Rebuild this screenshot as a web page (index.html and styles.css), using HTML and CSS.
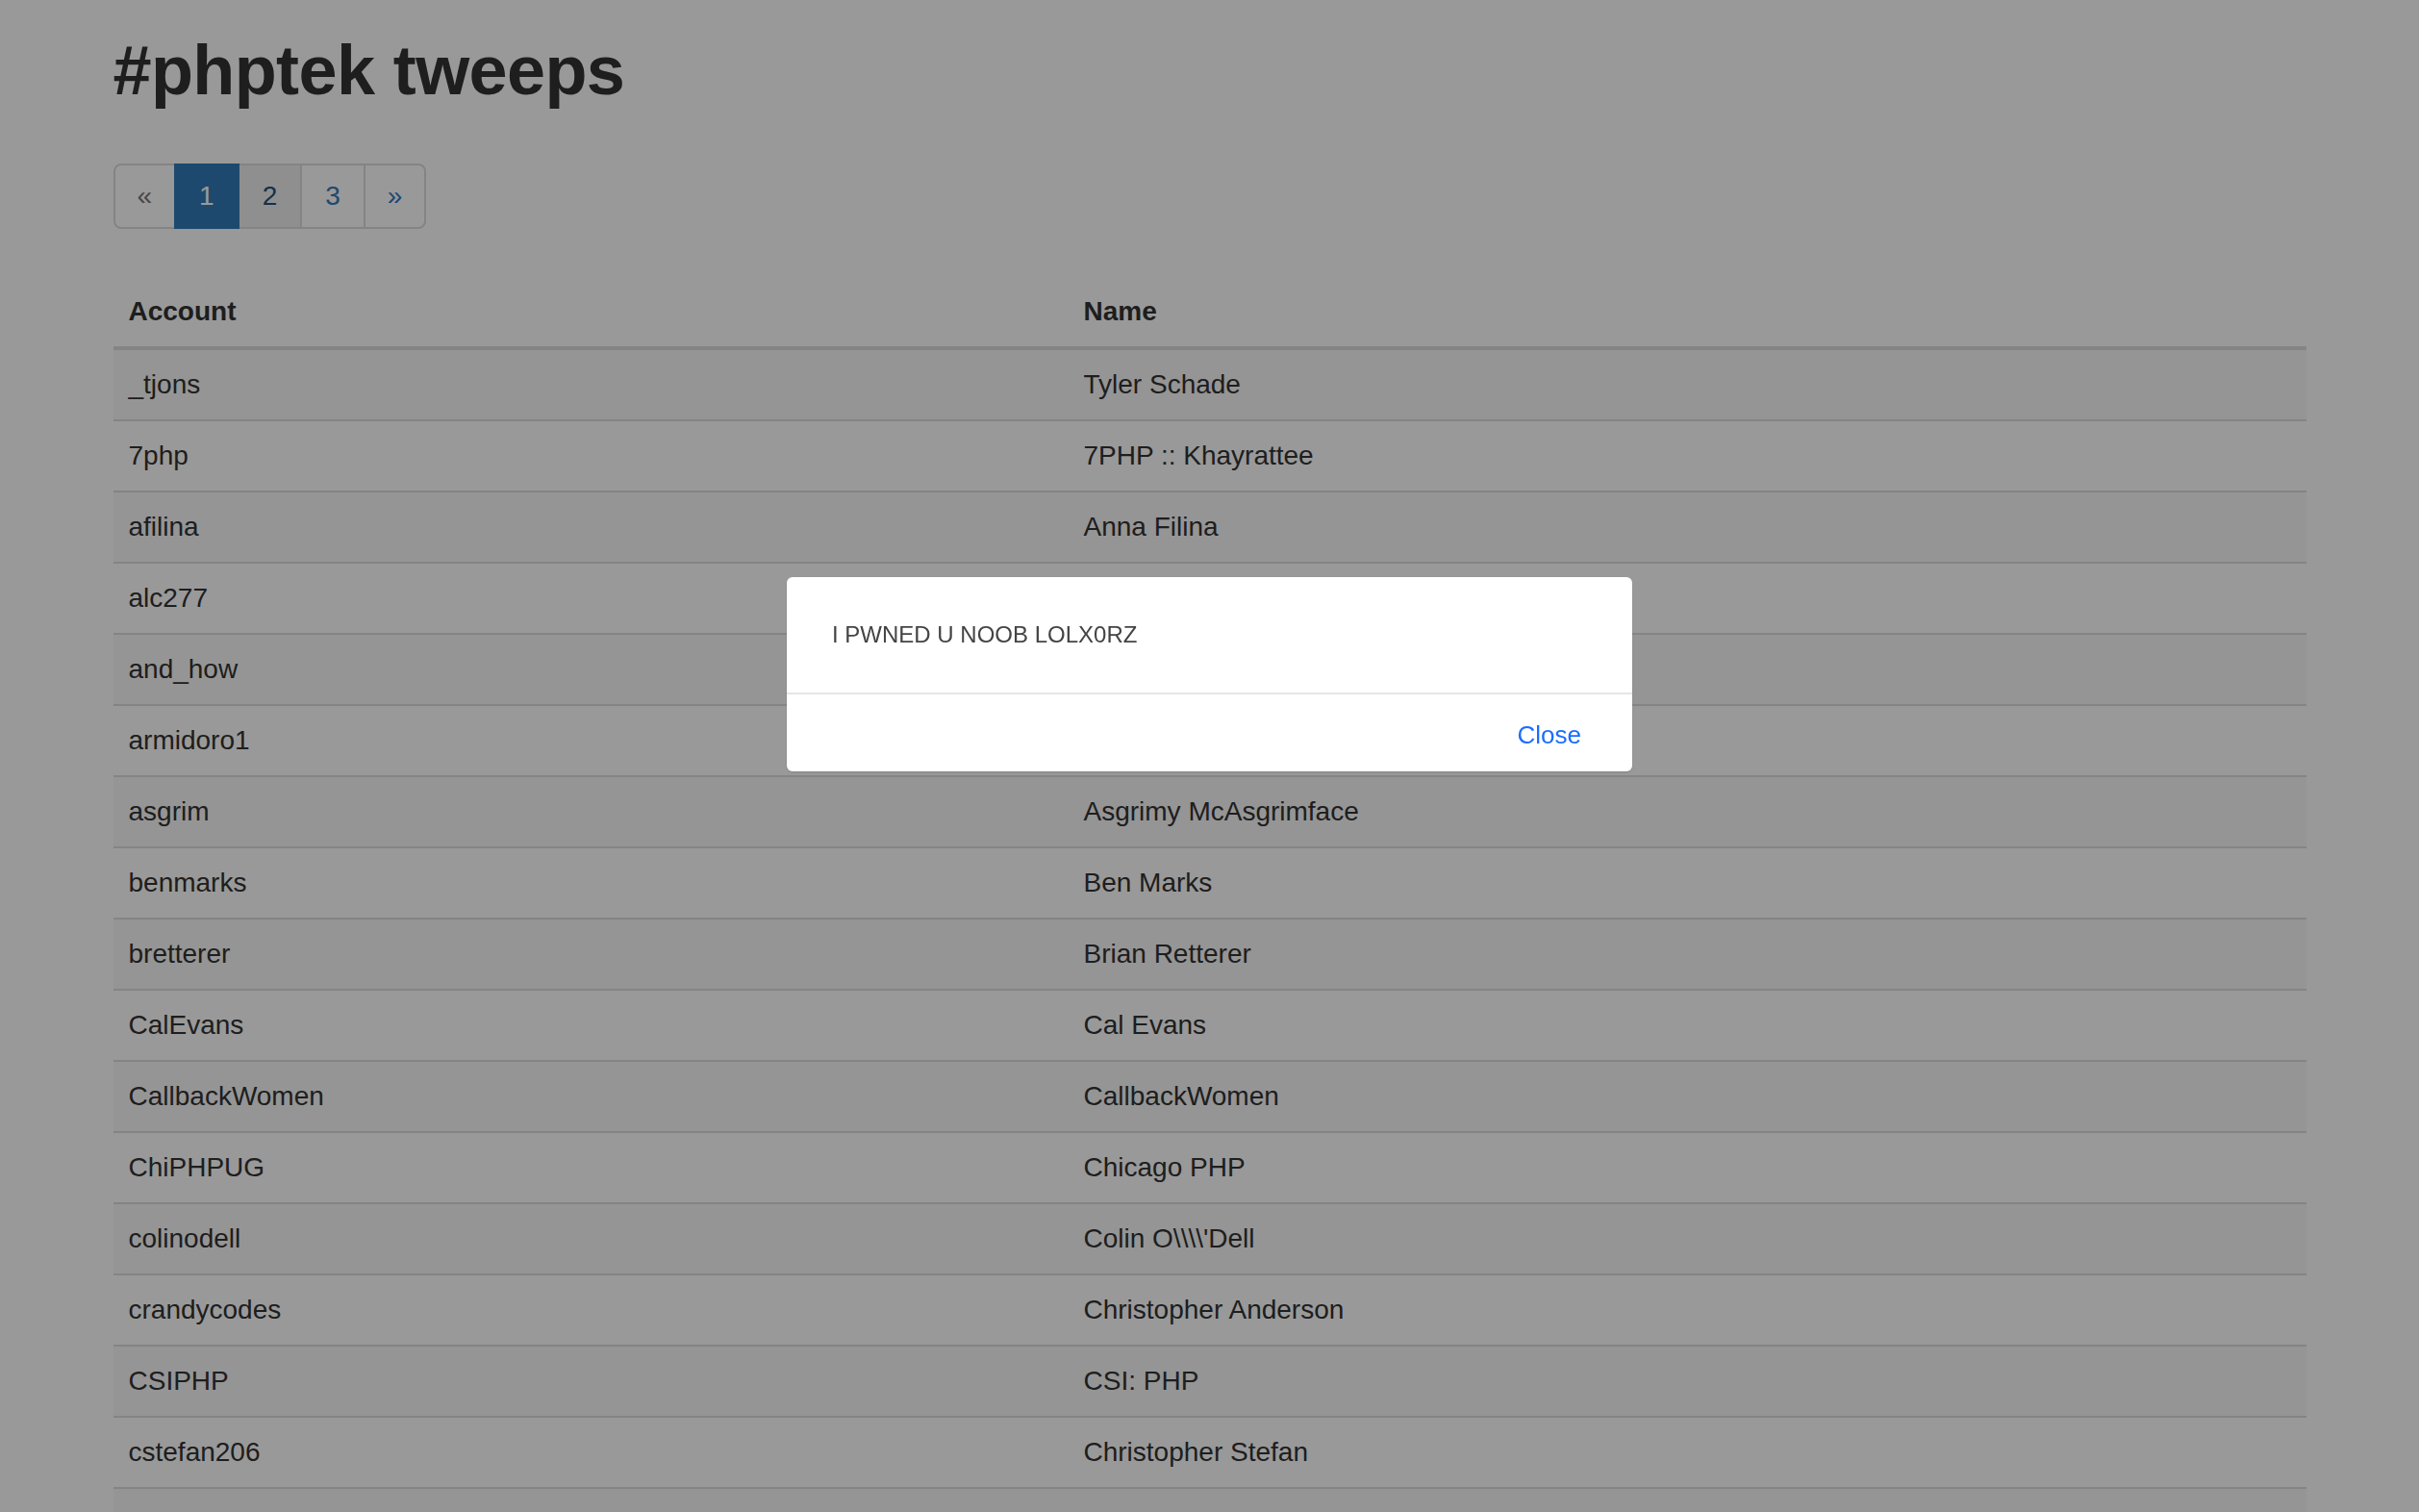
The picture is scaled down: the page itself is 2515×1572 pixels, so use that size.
FILE: index.html
```html
<!DOCTYPE html>
<html lang="en">
<head>
<meta charset="utf-8">
<title>#phptek tweeps</title>
<link rel="stylesheet" href="styles.css">
</head>
<body class="modal-open">
<div class="container">
  <h1 class="title">#phptek tweeps</h1>
  <nav class="pager-nav">
    <ul class="pagination">
      <li class="disabled arrow"><a href="#">&laquo;</a></li>
      <li class="active"><a href="#">1</a></li>
      <li class="hover"><a href="#">2</a></li>
      <li><a href="#">3</a></li>
      <li class="arrow"><a href="#">&raquo;</a></li>
    </ul>
  </nav>
  <table class="table">
    <thead>
      <tr><th class="col-account">Account</th><th>Name</th></tr>
    </thead>
    <tbody>
      <tr><td>_tjons</td><td>Tyler Schade</td></tr>
      <tr><td>7php</td><td>7PHP :: Khayrattee</td></tr>
      <tr><td>afilina</td><td>Anna Filina</td></tr>
      <tr><td>alc277</td><td>Andrew Caya</td></tr>
      <tr><td>and_how</td><td>Andrew Howard</td></tr>
      <tr><td>armidoro1</td><td>Armando Midoro</td></tr>
      <tr><td>asgrim</td><td>Asgrimy McAsgrimface</td></tr>
      <tr><td>benmarks</td><td>Ben Marks</td></tr>
      <tr><td>bretterer</td><td>Brian Retterer</td></tr>
      <tr><td>CalEvans</td><td>Cal Evans</td></tr>
      <tr><td>CallbackWomen</td><td>CallbackWomen</td></tr>
      <tr><td>ChiPHPUG</td><td>Chicago PHP</td></tr>
      <tr><td>colinodell</td><td>Colin O\\\\'Dell</td></tr>
      <tr><td>crandycodes</td><td>Christopher Anderson</td></tr>
      <tr><td>CSIPHP</td><td>CSI: PHP</td></tr>
      <tr><td>cstefan206</td><td>Christopher Stefan</td></tr>
      <tr><td>&nbsp;</td><td>&nbsp;</td></tr>
    </tbody>
  </table>
</div>
<div class="backdrop"></div>
<div class="dialog">
  <div class="dialog-body">I PWNED U NOOB LOLX0RZ</div>
  <div class="dialog-footer"><a class="dialog-close" href="#">Close</a></div>
</div>
</body>
</html>
```
FILE: styles.css
```css
html, body {
  margin: 0;
  padding: 0;
  height: 100%;
  overflow: hidden;
}

body {
  font-family: "Liberation Sans", Arial, sans-serif;
  font-size: 28px;
  line-height: 40px;
  color: #333;
  background: #fff;
}

.container {
  width: 2280px;
  padding: 0 30px;
  margin: 0 auto;
}

.title {
  margin: 34px 0 0;
  font-size: 72px;
  line-height: 79.2px;
  font-weight: 700;
  letter-spacing: -0.6px;
  color: #333;
}

.pager-nav {
  margin-top: 57px;
}

.pagination {
  display: flex;
  margin: 0;
  padding: 0;
  list-style: none;
}

.pagination li a {
  display: block;
  padding: 12px 24px;
  line-height: 40px;
  border: 2px solid #ddd;
  margin-left: -2px;
  color: #337ab7;
  background: #fff;
  text-decoration: none;
  position: relative;
}

.pagination li.arrow a {
  padding-left: 23px;
  padding-right: 23px;
}

.pagination li:first-child a {
  margin-left: 0;
  border-radius: 8px 0 0 8px;
}

.pagination li:last-child a {
  border-radius: 0 8px 8px 0;
}

.pagination li.disabled a {
  color: #777;
}

.pagination li.active a {
  background: #337ab7;
  border-color: #337ab7;
  color: #fff;
  z-index: 2;
}

.pagination li.hover a {
  background: #eee;
  color: #23527c;
}

.table {
  width: 100%;
  margin-top: 50px;
  border-collapse: collapse;
  table-layout: fixed;
}

.table th {
  text-align: left;
  padding: 16px;
  font-weight: 700;
  border-bottom: 4px solid #ddd;
  vertical-align: bottom;
}

.table th.col-account {
  width: 961px;
}

.table td {
  padding: 16px;
  border-top: 2px solid #ddd;
  vertical-align: top;
  white-space: nowrap;
}

.table tbody tr:first-child td {
  border-top: 0;
}

.table tbody tr:nth-child(odd) td {
  background: #f9f9f9;
}

.backdrop {
  position: fixed;
  top: 0;
  right: 0;
  bottom: 0;
  left: 0;
  z-index: 1040;
  background: rgba(0, 0, 0, 0.4);
}

.dialog {
  position: fixed;
  z-index: 1050;
  top: 600px;
  left: 0;
  right: 0;
  margin: 0 auto;
  width: 879px;
  background: #fff;
  border-radius: 6px;
  box-shadow: 0 1px 2px rgba(0, 0, 0, 0.15);
}

.dialog-body {
  padding: 43px 47px 43px;
  font-size: 24px;
  line-height: 34px;
  color: #444;
}

.dialog-footer {
  border-top: 2px solid #e5e5e5;
  padding: 24px 53px 20px;
  text-align: right;
  font-size: 26px;
  line-height: 36px;
}

.dialog-close {
  color: #1a6dff;
  text-decoration: none;
}
```
